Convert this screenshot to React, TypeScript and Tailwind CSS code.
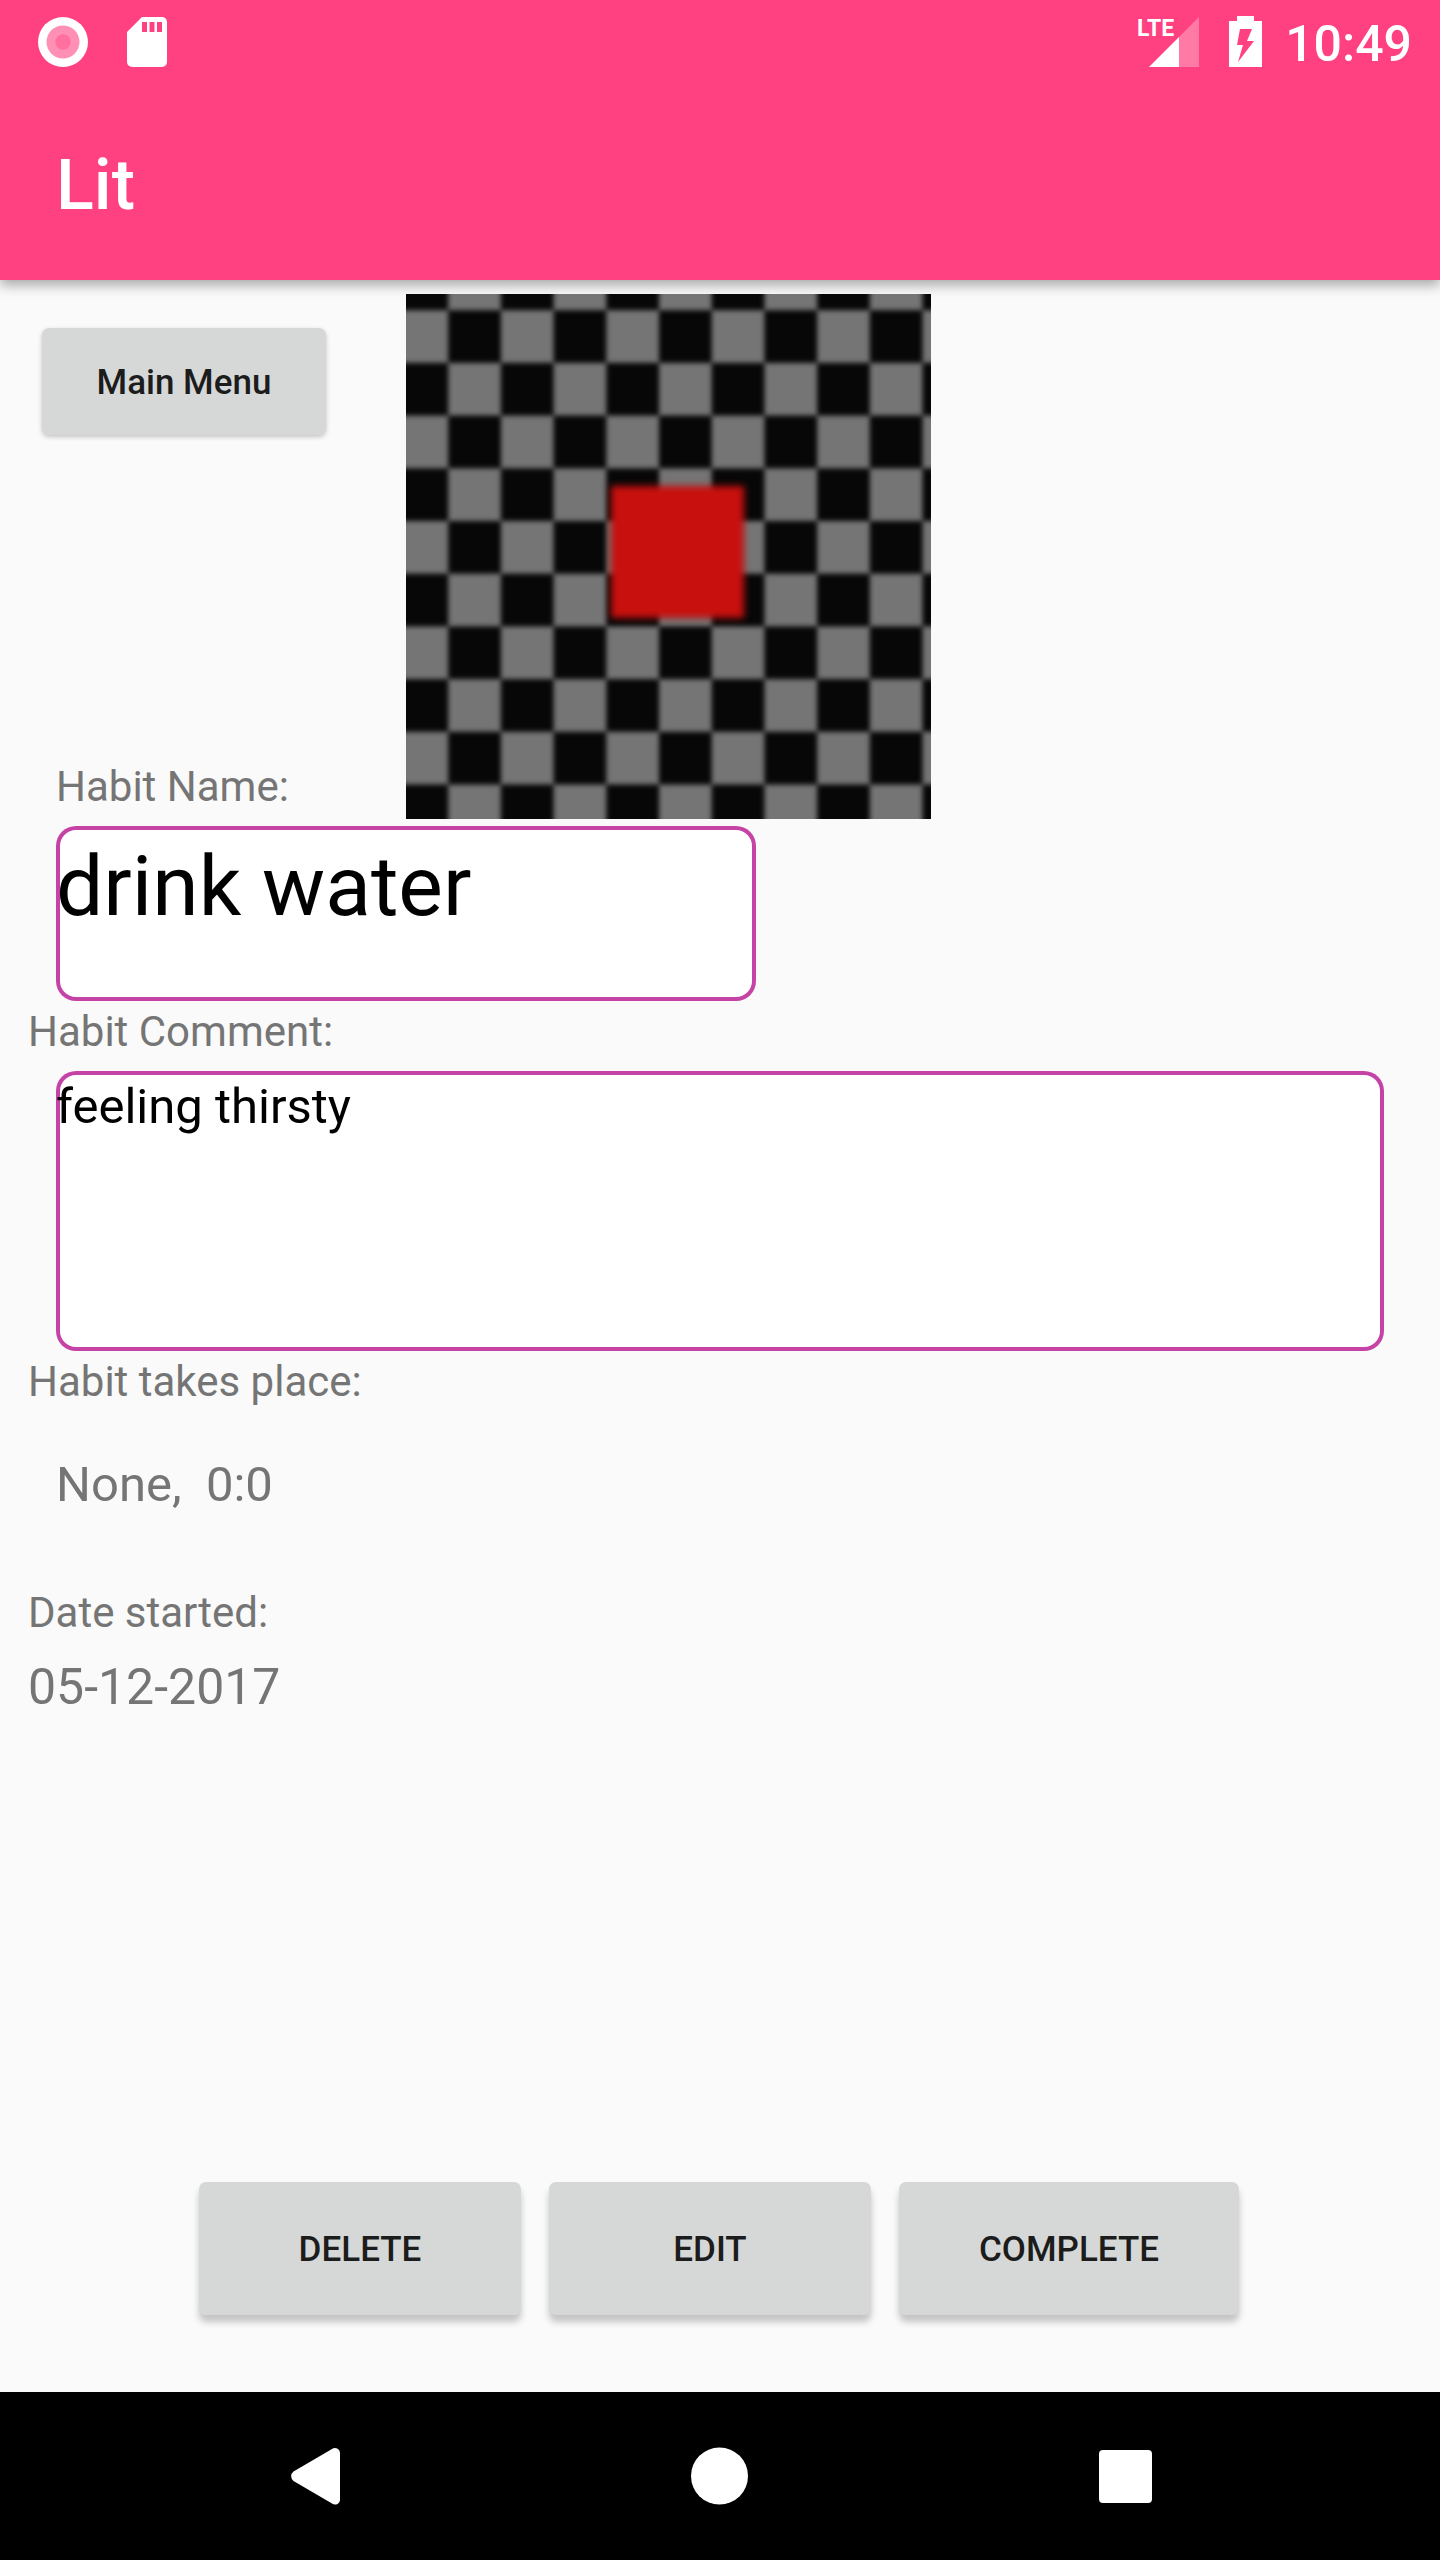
import React from "react";

const CELL = 52.7;
const cells = Array.from({ length: 13 * 13 }, (_, i) => ({
  row: Math.floor(i / 13) - 1,
  col: (i % 13) - 1,
})).filter(({ row, col }) => (row + col) % 2 === 0);

function StatusBar() {
  return (
    <div className="flex h-[84px] items-center justify-between pr-7 pl-[38px] text-white">
      <div className="flex items-center gap-[39px]">
        <svg className="size-[50px]" viewBox="0 0 50 50" aria-hidden="true">
          <circle cx="25" cy="25" r="25" fill="#fff" />
          <circle cx="25" cy="25" r="16.5" fill="#ff8fb4" />
          <circle cx="25" cy="25" r="7.7" fill="#ff709e" />
        </svg>
        <svg className="h-[50px] w-10" viewBox="0 0 40 50" aria-hidden="true">
          <path
            fill="#fff"
            fillRule="evenodd"
            d="M15 0H35a5 5 0 0 1 5 5V45a5 5 0 0 1-5 5H5a5 5 0 0 1-5-5V15ZM15 5V15H20V5ZM22.500 5V15H27.500V5ZM30 5V15H35V5Z"
          />
        </svg>
      </div>
      <div className="flex items-center">
        <svg className="h-[52px] w-[63px]" viewBox="0 0 63 52" role="img" aria-label="LTE signal">
          <path d="M62 1V51H42V21Z" fill="#ff7aa5" />
          <path d="M12 51 42 21V51Z" fill="#fff" />
          <text x="0" y="20" fill="#fff" className="font-['Roboto'] text-[23px] font-bold">
            LTE
          </text>
        </svg>
        <svg className="ml-[29px] h-[52px] w-[33px]" viewBox="0 0 33 52" aria-hidden="true">
          <path
            fill="#fff"
            fillRule="evenodd"
            d="M8 0H25V5H33V51H0V5H8ZM11 13 8 29H14L9 46 25 25H18L23 13Z"
          />
        </svg>
        <span className="ml-[23px] pt-1 text-[50px] leading-[58px] font-medium">10:49</span>
      </div>
    </div>
  );
}

function HabitPicture() {
  return (
    <svg className="size-[525px] shrink-0" viewBox="0 0 525 525" role="img" aria-label="Habit picture">
      <defs>
        <filter id="soft" x="-10%" y="-10%" width="120%" height="120%" colorInterpolationFilters="sRGB">
          <feGaussianBlur stdDeviation="2.6" />
        </filter>
        <filter id="softer" x="-10%" y="-10%" width="120%" height="120%" colorInterpolationFilters="sRGB">
          <feGaussianBlur stdDeviation="3.6" />
        </filter>
      </defs>
      <rect width="525" height="525" fill="#757575" />
      <g filter="url(#soft)" fill="#070707">
        {cells.map(({ row, col }) => (
          <rect
            key={`${row}:${col}`}
            x={-10.500 + col * CELL}
            y={-36.500 + row * CELL}
            width={CELL}
            height={CELL}
          />
        ))}
      </g>
      <rect x="205" y="192" width="133" height="132" fill="#c8100e" filter="url(#softer)" />
    </svg>
  );
}

const label = "block text-[42px] leading-[56px]";
const box = "block rounded-[20px] bg-white text-black inset-ring-4 inset-ring-[#c643a6] outline-none";
const button = "rounded-[7px] bg-[#d6d8d7] pt-[3px] text-[35px] leading-[42px] font-medium text-[#1c1c1c]";
const action = "h-[133px] px-20 uppercase shadow-[0_7px_7px_rgba(0,0,0,0.22)]";

export default function App() {
  return (
    <div className="flex min-h-screen flex-col bg-[#fafafa] font-['Roboto',sans-serif] text-[#757575]">
      <header className="bg-[#ff4081] shadow-[0_5px_12px_rgba(0,0,0,0.34)]">
        <StatusBar />
        <div className="flex h-[196px] items-center px-14 pt-1.5">
          <h1 className="text-[70px] leading-[82px] font-medium text-white">Lit</h1>
        </div>
      </header>

      <main className="flex flex-1 flex-col pt-3.5">
        <div className="flex">
          <div className="flex w-[406px] shrink-0 flex-col items-start justify-between pt-[34px] pb-1">
            <button type="button" className={`${button} ml-[42px] h-[107px] w-[284px] shadow-[0_2px_5px_rgba(0,0,0,0.22)]`}>
              Main Menu
            </button>
            <label htmlFor="name" className={`${label} pl-14`}>
              Habit Name:
            </label>
          </div>
          <HabitPicture />
        </div>
        <input
          id="name"
          type="text"
          defaultValue="drink water"
          className={`${box} mt-[7px] ml-14 h-[175px] w-[700px] pb-[55px] text-[84px] leading-[98px]`}
        />

        <label htmlFor="comment" className={`${label} mt-[3px] pl-7`}>
          Habit Comment:
        </label>
        <textarea
          id="comment"
          defaultValue="feeling thirsty"
          className={`${box} mx-14 mt-[11px] h-[280px] resize-none pt-[7px] text-[49px] leading-[58px]`}
        />

        <h2 className={`${label} mt-[3px] pl-7`}>Habit takes place:</h2>
        <p className="mt-[42px] pl-14 text-[49px] leading-[66px] whitespace-pre">None,  0:0</p>

        <h2 className={`${label} mt-[67px] pl-7`}>Date started:</h2>
        <p className="mt-[13px] pl-7 text-[50px] leading-[66px]">05-12-2017</p>

        <div className="mt-auto flex justify-center gap-7 pr-0.5 pb-[77px]">
          <button type="button" className={`${button} ${action} min-w-[322px]`}>
            Delete
          </button>
          <button type="button" className={`${button} ${action} min-w-[322px]`}>
            Edit
          </button>
          <button type="button" className={`${button} ${action}`}>
            Complete
          </button>
        </div>
      </main>

      <nav className="flex h-[168px] items-center justify-center gap-[308px] bg-black">
        <button type="button" aria-label="Back">
          <svg className="size-[98px]" viewBox="0 0 98 98" fill="#fff">
            <path d="M67 22a5 5 0 0 1 8 4V72a5 5 0 0 1-8 4.500L28.500 54a6 6 0 0 1 0-9.500Z" />
          </svg>
        </button>
        <button type="button" aria-label="Home">
          <svg className="size-[98px]" viewBox="0 0 98 98" fill="#fff">
            <circle cx="48.500" cy="49" r="28.500" />
          </svg>
        </button>
        <button type="button" aria-label="Recent apps">
          <svg className="size-[98px]" viewBox="0 0 98 98" fill="#fff">
            <rect x="22" y="23" width="53" height="53" rx="4" />
          </svg>
        </button>
      </nav>
    </div>
  );
}
